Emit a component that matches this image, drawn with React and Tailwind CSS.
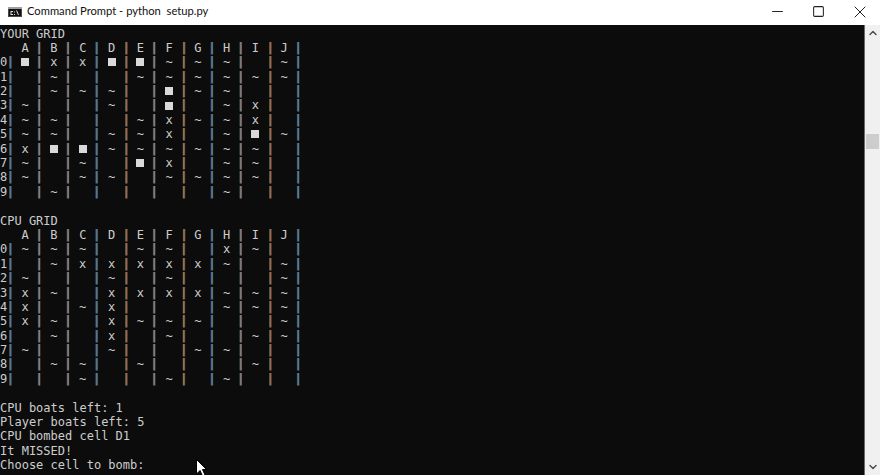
import React from 'react';
import { Minus, Square, X, ChevronUp, ChevronDown } from 'lucide-react';

const COLS = ['A', 'B', 'C', 'D', 'E', 'F', 'G', 'H', 'I', 'J'];

// o = boat, x = hit, ~ = water, . = empty
const yourGrid = [
  'oxxoo~~~.~',
  '.~..~~~~~~',
  '.~~~.o~~..',
  '~..~.o.~x.',
  '~~..~x~~x.',
  '~~.~~x.~o~',
  'xoo~~~~~~.',
  '~.~.ox.~~.',
  '~.~~.~~~~.',
  '.~.....~..',
];

const cpuGrid = [
  '~~~.~~.x~.',
  '.~xxxxx~.~',
  '~..~.~...~',
  'x~.xxxx~~~',
  'x.~x...~~~',
  'x~.x~~~..~',
  '.~.x.~..~~',
  '~..~..~~..',
  '.~~.~...~.',
  '..~..~.~..',
];

// ClearType tints of the | glyph depend on where it lands in the pixel grid
const BLUE = 'text-[#4f93c8] [text-shadow:-1px_0_0_#77716b]';
const MIXED = 'text-[#7d9dbd] [text-shadow:-1px_0_0_#a0703f]';
const ORANGE = 'text-[#c4843f] [text-shadow:1px_0_0_#6c7680]';
const BAR_TINTS = [BLUE, MIXED, MIXED, BLUE, ORANGE, MIXED, ORANGE, BLUE, MIXED, ORANGE, BLUE];

const Bar = ({ i }) => <span className={`flex w-[7.2px] justify-center ${BAR_TINTS[i]}`}>|</span>;

const Cell = ({ value }) => {
  if (value === 'o') {
    return (
      <span className="flex w-[21.6px] items-center justify-center">
        <span className="h-[8px] w-[8px] bg-[#d9d9d9]" />
      </span>
    );
  }
  return <span className="flex w-[21.6px] justify-center">{value === '.' ? '' : value}</span>;
};

const Grid = ({ title, rows }) => (
  <div>
    <div className="h-[14.4px]">{title}</div>
    <div className="flex h-[14.4px] pl-[14.4px]">
      {COLS.map((col, i) => (
        <span key={col} className="flex">
          <Cell value={col} />
          <Bar i={i + 1} />
        </span>
      ))}
    </div>
    {rows.map((row, r) => (
      <div key={r} className="flex h-[14.4px]">
        <span className="w-[7.2px]">{r}</span>
        <Bar i={0} />
        {row.split('').map((value, c) => (
          <span key={c} className="flex">
            <Cell value={value} />
            <Bar i={c + 1} />
          </span>
        ))}
      </div>
    ))}
  </div>
);

const App = () => {
  return (
    <div className="flex h-[475px] w-[880px] flex-col overflow-hidden bg-white font-['Lato',sans-serif]">
      <div className="flex h-[25px] items-center pb-[2px]">
        <svg className="ml-[8px] mr-[5px]" width="14" height="10" viewBox="0 0 14 10">
          <rect width="14" height="10" fill="#4a4a4a" />
          <rect x="0" y="0" width="14" height="2" fill="#a0a0a0" />
          <rect x="1" y="2" width="12" height="7" fill="#111" />
          <path d="M2.5 4H5V5H3.5V7H5V8H2.5ZM6 7H7V8H6ZM6 4.5H7V5.5H6ZM8 3.5H9L11 8H10Z" fill="#e0e0e0" />
        </svg>
        <span className="text-[11.2px] text-[#111]">Command Prompt - python&nbsp; setup.py</span>
        <div className="ml-auto flex h-full items-center text-[#222]">
          <div className="flex w-[41px] justify-center">
            <Minus size={17} strokeWidth={1.4} />
          </div>
          <div className="flex w-[41px] justify-center">
            <Square size={13} strokeWidth={1.9} />
          </div>
          <div className="flex w-[41px] justify-center">
            <X size={20} strokeWidth={1.2} />
          </div>
        </div>
      </div>
      <div className="flex min-h-0 flex-1">
        <div className="flex-1 overflow-hidden bg-[#0c0c0c] pt-[1.5px] font-['DejaVu_Sans_Mono',monospace] text-[12px] leading-[14.4px] whitespace-pre text-[#cccccc]">
          <Grid title="YOUR GRID" rows={yourGrid} />
          <div className="h-[14.4px]" />
          <Grid title="CPU GRID" rows={cpuGrid} />
          <div className="h-[14.4px]" />
          <div>CPU boats left: 1</div>
          <div>Player boats left: 5</div>
          <div>CPU bombed cell D1</div>
          <div>It MISSED!</div>
          <div className="relative">
            Choose cell to bomb:
            <svg className="absolute left-[196px] top-[1px]" width="12" height="17" viewBox="0 0 12 17">
              <path d="M0.5 0.5V15L4 11.5L6.5 17L9 16L6.5 10.5H10.5Z" fill="#fff" stroke="#000" />
            </svg>
          </div>
        </div>
        <div className="flex w-[16px] flex-col items-center border-l border-[#6a6a6a] bg-[#f0f0f0] py-[2px] text-[#505050]">
          <ChevronUp size={12} strokeWidth={3} />
          <div className="mt-[95px] h-[15px] w-[13px] bg-[#cdcdcd]" />
          <ChevronDown className="mt-auto" size={12} strokeWidth={3} />
        </div>
      </div>
    </div>
  );
};

export default App;
